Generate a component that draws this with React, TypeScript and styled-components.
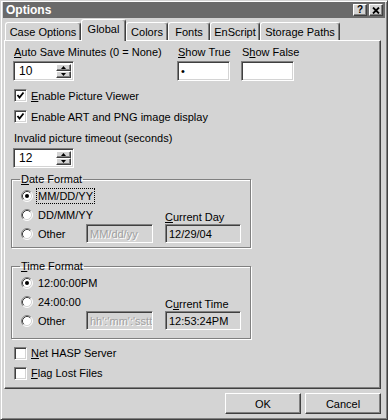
import { ReactNode } from "react";
import styled, { createGlobalStyle, css } from "styled-components";

const Global = createGlobalStyle`
  html, body {
    margin: 0;
    padding: 0;
    background: #d4d4d4;
  }
  body {
    font-family: "Liberation Sans", Arial, sans-serif;
    font-size: 11px;
    color: #000;
  }
  u {
    text-decoration: underline;
    text-underline-offset: 1px;
  }
`;

const sunken = css`
  box-sizing: border-box;
  border: 1px solid;
  border-color: #808080 #fff #fff #808080;
  box-shadow: inset 1px 1px 0 #404040, inset -1px -1px 0 #d4d4d4;
`;

const raised = css`
  box-sizing: border-box;
  border: 1px solid;
  border-color: #fff #404040 #404040 #fff;
  box-shadow: inset -1px -1px 0 #808080;
  background: #d4d4d4;
`;

const Window = styled.div`
  box-sizing: border-box;
  width: 388px;
  height: 420px;
  padding: 1px 2px 2px 2px;
  background: #d4d4d4;
  border: 1px solid;
  border-color: #d4d4d4 #404040 #404040 #d4d4d4;
  box-shadow: inset 1px 1px 0 #fff, inset -1px -1px 0 #808080;
  overflow: hidden;
`;

const TitleBar = styled.div`
  height: 16px;
  background: #6a6a6a;
  display: flex;
  align-items: center;
  padding: 0 2px 0 3px;
`;

const Title = styled.div`
  flex: 1;
  color: #fff;
  font-weight: bold;
  font-size: 12px;
`;

const TitleButton = styled.div`
  ${raised};
  width: 14px;
  height: 12px;
  margin-left: 2px;
  display: flex;
  align-items: center;
  justify-content: center;
  font-weight: bold;
  font-size: 10px;
  line-height: 10px;
`;

const TabStrip = styled.div`
  display: flex;
  align-items: flex-end;
  height: 21px;
  margin-top: 1px;
  padding-left: 2px;
`;

const Tab = styled.div<{ $w: number; $active?: boolean }>`
  box-sizing: border-box;
  width: ${(p) => p.$w}px;
  height: ${(p) => (p.$active ? 22 : 18)}px;
  margin-bottom: ${(p) => (p.$active ? -1 : 0)}px;
  padding-bottom: ${(p) => (p.$active ? 3 : 0)}px;
  position: ${(p) => (p.$active ? "relative" : "static")};
  z-index: ${(p) => (p.$active ? 1 : 0)};
  background: #d4d4d4;
  border-top: 1px solid #fff;
  border-left: 1px solid #fff;
  border-right: 1px solid #404040;
  box-shadow: inset -1px 0 0 #808080;
  border-radius: 3px 3px 0 0;
  display: flex;
  align-items: center;
  justify-content: center;
  white-space: nowrap;
`;

const Panel = styled.div`
  box-sizing: border-box;
  width: 377px;
  height: 349px;
  margin-left: 1px;
  border: 1px solid;
  border-color: #fff #404040 #404040 #fff;
  box-shadow: inset -1px -1px 0 #808080;
  padding: 4px 8px 0 8px;
  display: flex;
  flex-direction: column;
`;

const Row = styled.div<{ $mt?: number }>`
  display: flex;
  align-items: flex-start;
  margin-top: ${(p) => p.$mt ?? 0}px;
`;

const Col = styled.div<{ $w: number }>`
  width: ${(p) => p.$w}px;
  display: flex;
  flex-direction: column;
  gap: 2px;
`;

const Label = styled.div<{ $mt?: number }>`
  line-height: 14px;
  height: 14px;
  padding-left: 1px;
  margin-top: ${(p) => p.$mt ?? 0}px;
  white-space: nowrap;
`;

const Field = styled.div<{ $w: number; $h?: number; $gray?: boolean; $dim?: boolean }>`
  ${sunken};
  width: ${(p) => p.$w}px;
  height: ${(p) => p.$h ?? 20}px;
  background: ${(p) => (p.$gray ? "#d4d4d4" : "#fff")};
  color: ${(p) => (p.$dim ? "#a0a0a0" : "#000")};
  text-shadow: ${(p) => (p.$dim ? "1px 1px 0 #fff" : "none")};
  padding: 0 3px;
  display: flex;
  align-items: center;
  white-space: nowrap;
  overflow: hidden;
  position: relative;
`;

const SpinText = styled.span`
  padding-left: 2px;
  font-size: 12px;
`;

const SpinButtons = styled.div`
  position: absolute;
  right: 2px;
  top: 2px;
  bottom: 2px;
  width: 15px;
  display: flex;
  flex-direction: column;
`;

const SpinButton = styled.div`
  ${raised};
  flex: 1;
  display: flex;
  align-items: center;
  justify-content: center;
`;

const CheckRow = styled.div<{ $mt?: number; $h?: number }>`
  height: ${(p) => p.$h ?? 21}px;
  display: flex;
  align-items: center;
  gap: 4px;
  padding-left: 1px;
  margin-top: ${(p) => p.$mt ?? 0}px;
`;

const Box = styled.div`
  ${sunken};
  width: 13px;
  height: 13px;
  background: #fff;
  display: flex;
  align-items: center;
  justify-content: center;
`;

const Group = styled.fieldset<{ $mt: number; $h: number }>`
  box-sizing: border-box;
  width: 240px;
  height: ${(p) => p.$h}px;
  margin: ${(p) => p.$mt}px 0 0 -2px;
  padding: 0 8px 0 8px;
  border: 1px solid #808080;
  box-shadow: inset 1px 1px 0 #fff, 1px 1px 0 #fff;
  min-width: 0;
`;

const Legend = styled.legend`
  padding: 0 1px;
  line-height: 14px;
`;

const OptGrid = styled.div`
  display: grid;
  grid-template-columns: 65px 79px 76px;
  grid-template-rows: 19px 19px 19px;
  align-items: center;
  margin-left: 1px;
`;

const RadioRow = styled.div<{ $span?: number }>`
  grid-column: span ${(p) => p.$span ?? 1};
  display: flex;
  align-items: center;
  gap: 4px;
  white-space: nowrap;
`;

const Focus = styled.span<{ $on?: boolean }>`
  outline: ${(p) => (p.$on ? "1px dotted #000" : "none")};
  padding: 0 1px;
  line-height: 14px;
`;

const GridLabel = styled.div`
  align-self: end;
  line-height: 14px;
  white-space: nowrap;
`;

const Footer = styled.div`
  display: flex;
  justify-content: flex-end;
  gap: 4px;
  width: 377px;
  margin: 4px 0 0 1px;
`;

const Button = styled.div`
  ${raised};
  width: 76px;
  height: 21px;
  display: flex;
  align-items: center;
  justify-content: center;
`;

function Radio({ on }: { on?: boolean }) {
  return (
    <svg width="12" height="12" viewBox="0 0 12 12">
      <circle cx="6" cy="6" r="5" fill="#fff" />
      <path d="M9.89 2.11 A5.5 5.5 0 0 0 2.11 9.89" stroke="#808080" fill="none" />
      <path d="M9.18 2.82 A4.5 4.5 0 0 0 2.82 9.18" stroke="#404040" fill="none" />
      <path d="M9.89 2.11 A5.5 5.5 0 0 1 2.11 9.89" stroke="#fff" fill="none" />
      <path d="M9.18 2.82 A4.5 4.5 0 0 1 2.82 9.18" stroke="#d4d4d4" fill="none" />
      {on && <circle cx="6" cy="6" r="2" fill="#000" />}
    </svg>
  );
}

function Check({ on, children }: { on?: boolean; children: ReactNode }) {
  return (
    <>
      <Box>
        {on && (
          <svg width="9" height="9" viewBox="0 0 9 9">
            <polyline points="1.5,4 3.5,6.5 7.5,1.5" stroke="#000" strokeWidth="1.8" fill="none" />
          </svg>
        )}
      </Box>
      <span>{children}</span>
    </>
  );
}

function Arrow({ up }: { up?: boolean }) {
  return (
    <svg width="5" height="3" viewBox="0 0 5 3">
      <polygon points={up ? "2.5,0 5,3 0,3" : "0,0 5,0 2.5,3"} fill="#000" />
    </svg>
  );
}

function Spinner({ value }: { value: string }) {
  return (
    <Field $w={61}>
      <SpinText>{value}</SpinText>
      <SpinButtons>
        <SpinButton>
          <Arrow up />
        </SpinButton>
        <SpinButton>
          <Arrow />
        </SpinButton>
      </SpinButtons>
    </Field>
  );
}

type Fmt = {
  title: ReactNode;
  opts: string[];
  other: string;
  curLabel: ReactNode;
  cur: string;
  focused?: boolean;
};

function FormatGroup({ f, mt, h }: { f: Fmt; mt: number; h: number }) {
  return (
    <Group $mt={mt} $h={h}>
      <Legend>{f.title}</Legend>
      <OptGrid>
        <RadioRow $span={3}>
          <Radio on />
          <Focus $on={f.focused}>{f.opts[0]}</Focus>
        </RadioRow>
        <RadioRow $span={2}>
          <Radio />
          <Focus>{f.opts[1]}</Focus>
        </RadioRow>
        <GridLabel>{f.curLabel}</GridLabel>
        <RadioRow>
          <Radio />
          <Focus>Other</Focus>
        </RadioRow>
        <Field $w={67} $h={19} $gray $dim>
          {f.other}
        </Field>
        <Field $w={76} $h={19} $gray>
          {f.cur}
        </Field>
      </OptGrid>
    </Group>
  );
}

const dateFmt: Fmt = {
  title: (
    <>
      <u>D</u>ate Format
    </>
  ),
  opts: ["MM/DD/YY", "DD/MM/YY"],
  other: "MM/dd/yy",
  curLabel: (
    <>
      <u>C</u>urrent Day
    </>
  ),
  cur: "12/29/04",
  focused: true,
};

const timeFmt: Fmt = {
  title: (
    <>
      <u>T</u>ime Format
    </>
  ),
  opts: ["12:00:00PM", "24:00:00"],
  other: "hh':'mm':'sstt",
  curLabel: (
    <>
      C<u>u</u>rrent Time
    </>
  ),
  cur: "12:53:24PM",
};

const tabs = [
  { name: "Case Options", w: 76 },
  { name: "Global", w: 45, active: true },
  { name: "Colors", w: 42 },
  { name: "Fonts", w: 42 },
  { name: "EnScript", w: 50 },
  { name: "Storage Paths", w: 80 },
];

export default function App() {
  return (
    <>
      <Global />
      <Window>
        <TitleBar>
          <Title>Options</Title>
          <TitleButton>?</TitleButton>
          <TitleButton>
            <svg width="8" height="7" viewBox="0 0 8 7">
              <path d="M1 0.5 L7 6.5 M7 0.5 L1 6.5" stroke="#000" strokeWidth="1.8" />
            </svg>
          </TitleButton>
        </TitleBar>

        <TabStrip>
          {tabs.map((t) => (
            <Tab key={t.name} $w={t.w} $active={t.active}>
              {t.name}
            </Tab>
          ))}
        </TabStrip>

        <Panel>
          <Row>
            <Col $w={164}>
              <Label>
                <u>A</u>uto Save Minutes (0 = None)
              </Label>
              <Spinner value="10" />
            </Col>
            <Col $w={64}>
              <Label>
                <u>S</u>how True
              </Label>
              <Field $w={53}>•</Field>
            </Col>
            <Col $w={64}>
              <Label>
                S<u>h</u>ow False
              </Label>
              <Field $w={53} />
            </Col>
          </Row>

          <CheckRow $mt={4}>
            <Check on>
              <u>E</u>nable Picture Viewer
            </Check>
          </CheckRow>
          <CheckRow>
            <Check on>Enable ART and PNG image display</Check>
          </CheckRow>

          <Label $mt={4}>Invalid picture timeout (seconds)</Label>
          <Row $mt={3}>
            <Spinner value="12" />
          </Row>

          <FormatGroup f={dateFmt} mt={4} h={76} />
          <FormatGroup f={timeFmt} mt={11} h={80} />

          <CheckRow $mt={4} $h={20}>
            <Check>
              <u>N</u>et HASP Server
            </Check>
          </CheckRow>
          <CheckRow $h={20}>
            <Check>
              <u>F</u>lag Lost Files
            </Check>
          </CheckRow>
        </Panel>

        <Footer>
          <Button>OK</Button>
          <Button>Cancel</Button>
        </Footer>
      </Window>
    </>
  );
}
